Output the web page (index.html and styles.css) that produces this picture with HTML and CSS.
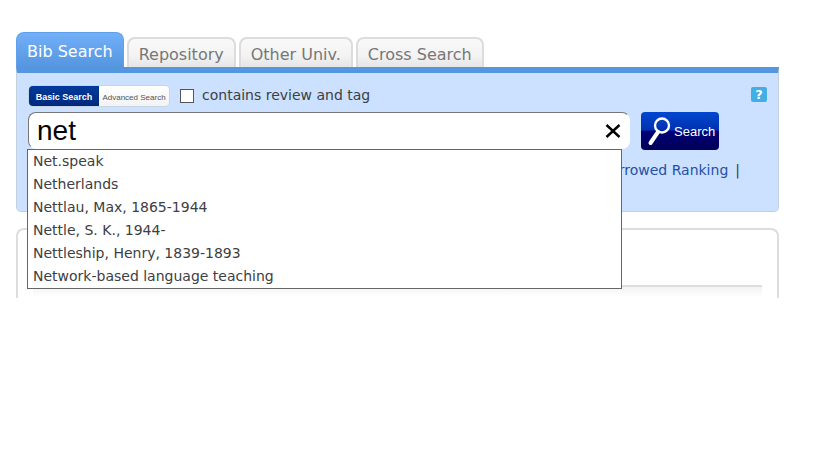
FILE: index.html
```html
<!DOCTYPE html>
<html lang="en">
<head>
  <meta charset="UTF-8" />
  <title>Bib Search</title>
  <link rel="stylesheet" href="styles.css">
</head>
<body>

<div class="page">
  <nav class="tabs">
    <a href="#" class="tab active">Bib Search</a>
    <a href="#" class="tab">Repository</a>
    <a href="#" class="tab">Other Univ.</a>
    <a href="#" class="tab">Cross Search</a>
  </nav>

  <form class="panel">
    <div class="options">
      <div class="modes">
        <button type="button" class="mode selected">Basic Search</button>
        <button type="button" class="mode">Advanced Search</button>
      </div>
      <input type="checkbox" id="review" class="check">
      <label for="review">contains review and tag</label>
      <button type="button" class="help" aria-label="Help">?</button>
    </div>

    <div class="search-row">
      <div class="search-box">
        <input type="text" class="query" aria-label="Search" value="net" autocomplete="off">
        <button type="button" class="clear" aria-label="Clear">
          <svg width="16" height="16" viewBox="0 0 16 16"><path d="M1.5 2L14.5 14M14.5 2L1.5 14" stroke="#000" stroke-width="2.4" fill="none"/></svg>
        </button>
        <ul class="suggestions">
          <li>Net.speak</li>
          <li>Netherlands</li>
          <li>Nettlau, Max, 1865-1944</li>
          <li>Nettle, S. K., 1944-</li>
          <li>Nettleship, Henry, 1839-1893</li>
          <li>Network-based language teaching</li>
        </ul>
      </div>
      <button type="submit" class="search-button">
        <svg width="24" height="30" viewBox="0 0 24 30"><circle cx="15" cy="9.5" r="7" fill="none" stroke="#fff" stroke-width="2.4"/><path d="M11 16L3.5 27" stroke="#fff" stroke-width="4" stroke-linecap="round"/></svg>
        <span>Search</span>
      </button>
    </div>

    <div class="links"><a href="#">Borrowed Ranking</a><span>|</span></div>
  </form>

  <div class="content">
    <div class="divider"></div>
  </div>
</div>

</body>
</html>
```
FILE: styles.css
```css
* {
  box-sizing: border-box;
}
body {
  margin: 0;
  background: #fff;
  color: #3c4043;
  font-family: Verdana, "DejaVu Sans", sans-serif;
  font-size: 14px;
}
button {
  padding: 0;
  border: none;
  cursor: pointer;
}
.page {
  margin: 0 40px 0 16px;
  padding-top: 32px;
}
.tabs {
  display: flex;
  align-items: flex-end;
  gap: 3px;
}
.tab {
  height: 30px;
  padding: 0 10px;
  border: 2px solid #dcdcdc;
  border-bottom: none;
  border-radius: 8px 8px 0 0;
  background: linear-gradient(#f9f9f9, #f3f3f3 60%, #e5e5e5);
  color: #777;
  font-size: 16px;
  line-height: 32px;
  text-decoration: none;
  white-space: nowrap;
}
.tab.active {
  height: 35px;
  border: 1px solid #60a0ea;
  border-bottom: none;
  background: linear-gradient(#72b0f8, #5596e0);
  color: #fff;
  line-height: 38px;
}
.panel {
  height: 145px;
  padding: 12px 11px 0;
  border: 1px solid #c3d0e0;
  border-top: 6px solid #5596e0;
  border-radius: 0 0 5px 5px;
  background: #cbe1ff;
}
.options {
  display: flex;
  align-items: center;
  height: 22px;
}
.options label {
  line-height: 18px;
  padding-bottom: 2px;
}
.modes {
  display: flex;
  height: 22px;
  border: 1px solid #c8d4e4;
  border-radius: 5px;
  overflow: hidden;
}
.mode {
  width: 70px;
  padding-top: 2px;
  background: linear-gradient(#fff, #f3f3f3);
  color: #555;
  font-family: "Liberation Sans", Arial, sans-serif;
  font-size: 8px;
  white-space: nowrap;
}
.mode.selected {
  background: linear-gradient(#003a9c, #00297c);
  color: #fff;
  font-size: 9px;
  font-weight: bold;
}
.check {
  appearance: none;
  width: 14px;
  height: 14px;
  margin: 0 8px 0 10px;
  border: 1px solid #555;
  background: #fff;
}
.help {
  width: 16px;
  height: 15px;
  margin-left: auto;
  margin-bottom: 4px;
  border-radius: 2px;
  background: #42aee6;
  color: #fff;
  font-family: "DejaVu Sans", sans-serif;
  font-size: 13px;
  font-weight: bold;
  line-height: 15px;
}
.search-row {
  display: flex;
  gap: 11px;
  margin: 5px 48px 0 0;
}
.search-box {
  position: relative;
  flex: 1;
  display: flex;
  align-items: center;
  height: 37px;
  border: 1px solid #fff;
  border-top-color: #777;
  border-left-color: #777;
  border-radius: 8px;
  background: #fff;
}
.query {
  flex: 1;
  min-width: 0;
  height: 35px;
  padding: 0 8px;
  border: none;
  outline: none;
  background: none;
  color: #000;
  font-family: "Liberation Sans", Arial, sans-serif;
  font-size: 28px;
}
.clear {
  display: flex;
  margin-right: 8px;
  background: none;
}
.suggestions {
  position: absolute;
  top: 36px;
  left: -2px;
  right: 7px;
  margin: 0;
  padding: 0 5px;
  border: 1px solid #666;
  background: #fff;
  list-style: none;
  line-height: 23px;
}
.search-button {
  display: flex;
  align-items: center;
  width: 78px;
  height: 38px;
  padding-left: 6px;
  gap: 3px;
  border-radius: 4px;
  background: linear-gradient(#0048d0, #0030b0 48%, #000078 50%, #000058);
  color: #fff;
  font-family: "Liberation Sans", Arial, sans-serif;
  font-size: 13px;
}
.links {
  display: flex;
  justify-content: flex-end;
  gap: 7px;
  margin: 11px 27px 0 0;
  line-height: 18px;
}
.links a {
  color: #2450a4;
  text-decoration: none;
}
.content {
  height: 70px;
  margin-top: 16px;
  padding: 55px 15px 0;
  border: 2px solid #ddd;
  border-bottom: none;
  border-radius: 8px 8px 0 0;
}
.divider {
  height: 12px;
  border-top: 2px solid #ddd;
  background: linear-gradient(#f3f3f3, #fff);
}
```
